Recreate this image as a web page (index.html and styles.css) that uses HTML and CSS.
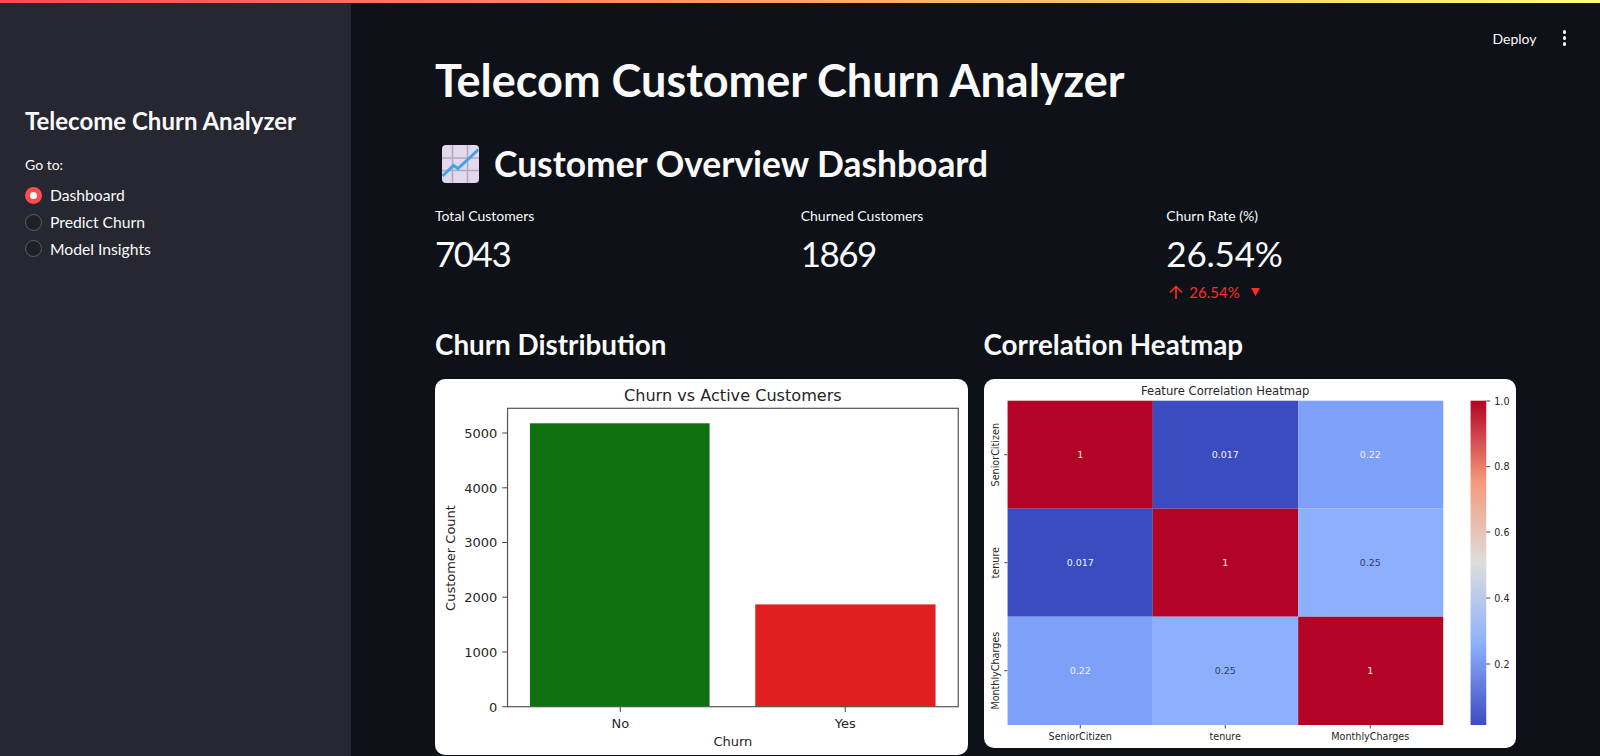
FILE: index.html
```html
<!DOCTYPE html>
<html>
<head>
  <title>Telecom Customer Churn Analyzer</title>
  <link rel="stylesheet" href="styles.css">
</head>
<body>
  <div class="top-line"></div>
  <div class="app">
    <aside class="sidebar">
      <h3>Telecome Churn Analyzer</h3>
      <p class="radio-label">Go to:</p>
      <div class="radio-row"><span class="radio checked"></span>Dashboard</div>
      <div class="radio-row"><span class="radio"></span>Predict Churn</div>
      <div class="radio-row"><span class="radio"></span>Model Insights</div>
    </aside>

    <main class="main">
      <div class="toolbar">
        <span class="deploy">Deploy</span>
        <span class="kebab"><i></i><i></i><i></i></span>
      </div>

      <div class="content">
        <h1>Telecom Customer Churn Analyzer</h1>

        <h2>
          <svg class="emoji" viewBox="0 0 37 38">
            <rect width="37" height="38" rx="4" fill="#e2d9ee"/>
            <path d="M10.500 0V38M25.500 0V38M0 13H37M0 25.500H37" stroke="#b5a8bd" stroke-width="1.500"/>
            <path d="M0.500 31L11.500 20.500L16 23.500L36.500 4.500" fill="none" stroke="#41a5e6" stroke-width="3"/>
          </svg>
          Customer Overview Dashboard
        </h2>

        <div class="metrics">
          <div class="metric">
            <div class="metric-label">Total Customers</div>
            <div class="metric-value">7043</div>
          </div>
          <div class="metric">
            <div class="metric-label">Churned Customers</div>
            <div class="metric-value">1869</div>
          </div>
          <div class="metric">
            <div class="metric-label">Churn Rate (%)</div>
            <div class="metric-value percent">26.54%</div>
            <div class="metric-delta">
              <svg class="delta-arrow" viewBox="0 0 14 14">
                <path d="M7 14V1.500M1 7.500L7 1.500L13 7.500" fill="none" stroke="#ff2b2b" stroke-width="1.600"/>
              </svg>
              <span>26.54%</span>
              <svg class="delta-tri" viewBox="0 0 9 8"><path d="M0 0H9L4.500 8Z" fill="#ff2b2b"/></svg>
            </div>
          </div>
        </div>

        <div class="charts">
          <div class="chart-col">
            <h3 class="chart-title">Churn Distribution</h3>
            <div class="card card-bar">
              <svg class="plot" viewBox="0 0 532 376">
                <text class="t-title" x="297.600" y="21.500" text-anchor="middle">Churn vs Active Customers</text>
                <rect x="94.700" y="44.300" width="179.600" height="283.400" fill="#107010"/>
                <rect x="320" y="225.400" width="180.300" height="102.300" fill="#e02020"/>
                <rect x="72.300" y="29.300" width="450.700" height="298.400" fill="none" stroke="#555" stroke-width="1.200"/>
                <path d="M67 327.700H72M67 273H72M67 218.200H72M67 163.500H72M67 108.800H72M67 54H72M185 328V333M410 328V333" stroke="#444" stroke-width="1"/>
                <g class="t-tick" text-anchor="end">
                  <text x="62" y="332.500">0</text>
                  <text x="62" y="277.800">1000</text>
                  <text x="62" y="223">2000</text>
                  <text x="62" y="168.300">3000</text>
                  <text x="62" y="113.600">4000</text>
                  <text x="62" y="58.800">5000</text>
                </g>
                <g class="t-tick" text-anchor="middle">
                  <text x="185" y="348.500">No</text>
                  <text x="410" y="348.500">Yes</text>
                  <text x="297.600" y="367">Churn</text>
                  <text transform="translate(20 179) rotate(-90)">Customer Count</text>
                </g>
              </svg>
            </div>
          </div>

          <div class="chart-col">
            <h3 class="chart-title">Correlation Heatmap</h3>
            <div class="card card-heat">
              <svg class="plot" viewBox="0 0 532 369">
                <defs>
                  <linearGradient id="coolwarm" x1="0" y1="1" x2="0" y2="0">
                    <stop offset="0" stop-color="#3b4cc0"/>
                    <stop offset="0.25" stop-color="#8db0fe"/>
                    <stop offset="0.5" stop-color="#dddddd"/>
                    <stop offset="0.75" stop-color="#f49a7b"/>
                    <stop offset="1" stop-color="#b40426"/>
                  </linearGradient>
                </defs>
                <text class="t-heat-title" x="241" y="16" text-anchor="middle">Feature Correlation Heatmap</text>

                <rect x="23.300" y="21.700" width="145.300" height="108" fill="#b40426"/>
                <rect x="168.600" y="21.700" width="145.300" height="108" fill="#3b4cc0"/>
                <rect x="313.900" y="21.700" width="145.100" height="108" fill="#7da0f9"/>
                <rect x="23.300" y="129.700" width="145.300" height="108" fill="#3b4cc0"/>
                <rect x="168.600" y="129.700" width="145.300" height="108" fill="#b40426"/>
                <rect x="313.900" y="129.700" width="145.100" height="108" fill="#8caffe"/>
                <rect x="23.300" y="237.700" width="145.300" height="108.300" fill="#7da0f9"/>
                <rect x="168.600" y="237.700" width="145.300" height="108.300" fill="#8caffe"/>
                <rect x="313.900" y="237.700" width="145.100" height="108.300" fill="#b40426"/>

                <g class="t-annot" text-anchor="middle">
                  <text x="96" y="79">1</text>
                  <text x="241" y="79">0.017</text>
                  <text x="386" y="79">0.22</text>
                  <text x="96" y="187">0.017</text>
                  <text x="241" y="187">1</text>
                  <text class="t-annot-dark" x="386" y="187">0.25</text>
                  <text x="96" y="295">0.22</text>
                  <text class="t-annot-dark" x="241" y="295">0.25</text>
                  <text x="386" y="295">1</text>
                </g>

                <path d="M20 75.700H23M20 183.700H23M20 291.700H23M96 346V349.500M241 346V349.500M386 346V349.500" stroke="#444" stroke-width="1"/>
                <g class="t-heat-tick" text-anchor="middle">
                  <text transform="translate(15 75.700) rotate(-90)">SeniorCitizen</text>
                  <text transform="translate(15 183.700) rotate(-90)">tenure</text>
                  <text transform="translate(15 291.700) rotate(-90)">MonthlyCharges</text>
                  <text x="96" y="361">SeniorCitizen</text>
                  <text x="241" y="361">tenure</text>
                  <text x="386" y="361">MonthlyCharges</text>
                </g>

                <rect x="486.300" y="21.700" width="15.700" height="324.300" fill="url(#coolwarm)"/>
                <path d="M502 22H506M502 87.700H506M502 153H506M502 219H506M502 285H506" stroke="#444" stroke-width="1"/>
                <g class="t-heat-tick">
                  <text x="510" y="26">1.0</text>
                  <text x="510" y="91">0.8</text>
                  <text x="510" y="156.500">0.6</text>
                  <text x="510" y="222.500">0.4</text>
                  <text x="510" y="288.500">0.2</text>
                </g>
              </svg>
            </div>
          </div>
        </div>
      </div>
    </main>
  </div>
</body>
</html>
```
FILE: styles.css
```css
* {
  box-sizing: border-box;
}

html, body {
  margin: 0;
  height: 100%;
  overflow: hidden;
}

body {
  display: flex;
  flex-direction: column;
  background-color: #0e1117;
  color: #fafafa;
  font-family: Lato, "Noto Sans", sans-serif;
}

.top-line {
  flex: none;
  height: 3px;
  background: linear-gradient(90deg, #ff4b4b, #fffd80);
}

.app {
  flex: 1;
  display: flex;
  min-height: 0;
}

/* sidebar */
.sidebar {
  flex: none;
  width: 351px;
  background-color: #262730;
  padding: 103px 25px 0;
}

.sidebar h3 {
  margin: 0 0 19px;
  font-size: 24px;
  line-height: 30px;
  font-weight: 700;
}

.radio-label {
  margin: 0 0 7px;
  font-size: 14px;
  line-height: 20px;
}

.radio-row {
  display: flex;
  align-items: center;
  gap: 8px;
  height: 26.700px;
  font-size: 15.700px;
}

.radio {
  width: 17px;
  height: 17px;
  border-radius: 50%;
  border: 1px solid #5b5c66;
  background-color: #1f2027;
}

.radio.checked {
  border: 5.500px solid #ff4b4b;
  background-color: #fff;
}

/* main */
.main {
  flex: 1;
  min-width: 0;
}

.toolbar {
  display: flex;
  justify-content: flex-end;
  align-items: center;
  gap: 26px;
  height: 70px;
  padding: 0 34px 0 0;
  font-size: 14px;
}

.kebab {
  display: flex;
  flex-direction: column;
  gap: 2.500px;
}

.kebab i {
  width: 3.500px;
  height: 3.500px;
  border-radius: 50%;
  background-color: #fafafa;
}

.content {
  width: 1081px;
  margin-left: 84px;
  margin-top: -19px;
}

h1 {
  margin: 0;
  font-size: 45px;
  line-height: 52px;
  font-weight: 700;
}

h2 {
  display: flex;
  align-items: center;
  gap: 15px;
  margin: 35px 0 0;
  padding-left: 7px;
  font-size: 35.400px;
  line-height: 46px;
  font-weight: 700;
}

.emoji {
  width: 37px;
  height: 38px;
}

.metrics {
  display: grid;
  grid-template-columns: repeat(3, 1fr);
  gap: 16px;
  margin-top: 19px;
  height: 121px;
}

.metric-label {
  font-size: 14px;
  line-height: 20px;
}

.metric-value {
  padding-top: 2px;
  font-size: 35px;
  line-height: 50px;
  letter-spacing: -1.500px;
}

.metric-value.percent {
  letter-spacing: -0.200px;
}

.metric-delta {
  display: flex;
  align-items: center;
  gap: 6px;
  margin-top: 4px;
  color: #ff2b2b;
  font-size: 15px;
  line-height: 20px;
  padding-left: 3px;
}

.delta-arrow {
  width: 14px;
  height: 14px;
}

.delta-tri {
  width: 9px;
  height: 8px;
  margin-left: 5px;
}

.charts {
  display: grid;
  grid-template-columns: repeat(2, 1fr);
  gap: 16px;
}

.chart-title {
  margin: 0 0 16px;
  font-size: 27.800px;
  line-height: 36px;
  font-weight: 700;
}

.card {
  background-color: #fff;
  border-radius: 10px;
  overflow: hidden;
}

.card-bar {
  height: 376px;
}

.card-heat {
  height: 369px;
}

.plot {
  display: block;
  width: 100%;
  height: 100%;
}

/* chart text */
.plot text {
  font-family: "DejaVu Sans", sans-serif;
  fill: #262626;
}

.t-title {
  font-size: 16.100px;
}

.t-tick {
  font-size: 13px;
}

.t-heat-title {
  font-size: 11.600px;
}

.t-heat-tick {
  font-size: 9.600px;
}

.plot .t-annot text {
  font-size: 9.500px;
  fill: #f2f2f2;
}

.plot .t-annot .t-annot-dark {
  fill: #33405f;
}
```
